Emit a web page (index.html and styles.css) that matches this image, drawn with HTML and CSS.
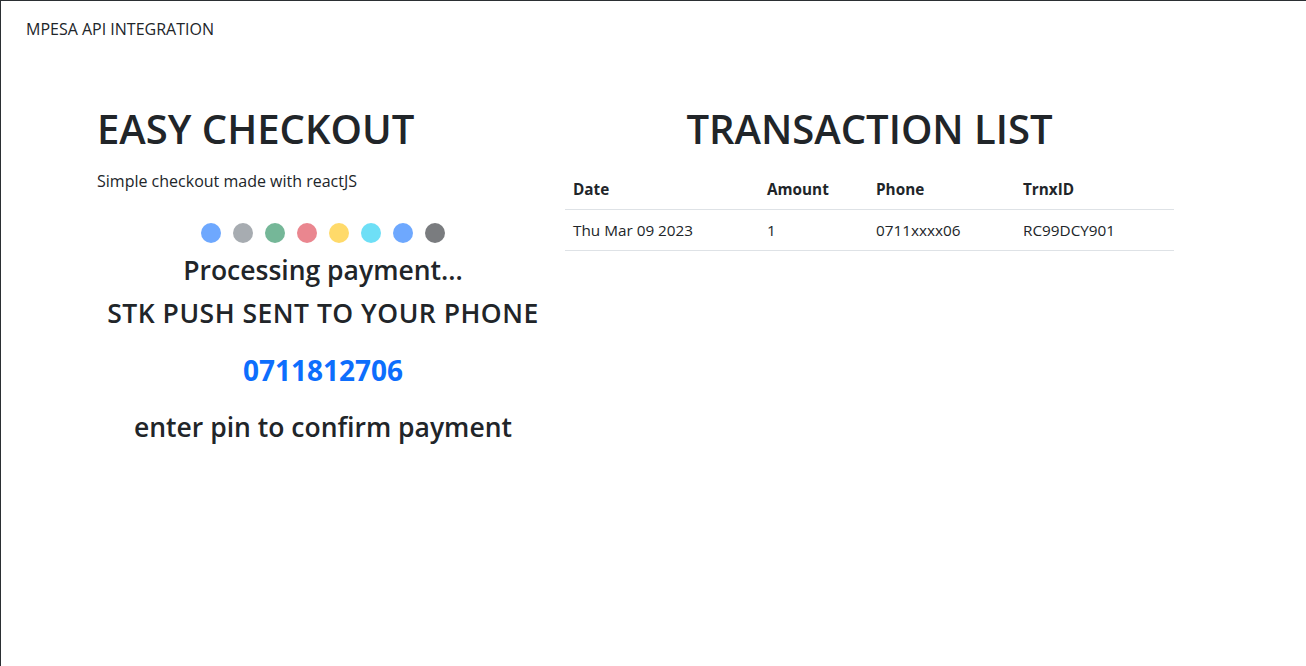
FILE: index.html
```html
<!DOCTYPE html>
<html lang="en">
<head>
<meta charset="utf-8">
<title>MPESA API INTEGRATION</title>
<link rel="stylesheet" href="styles.css">
</head>
<body>
<div class="frame">
  <nav class="navbar">MPESA API INTEGRATION</nav>
  <main class="content">
    <section class="checkout">
      <h1 class="title">EASY CHECKOUT</h1>
      <p class="lead">Simple checkout made with reactJS</p>
      <div class="dots">
        <span class="dot dot-primary"></span>
        <span class="dot dot-secondary"></span>
        <span class="dot dot-success"></span>
        <span class="dot dot-danger"></span>
        <span class="dot dot-warning"></span>
        <span class="dot dot-info"></span>
        <span class="dot dot-primary"></span>
        <span class="dot dot-dark"></span>
      </div>
      <h3 class="status first">Processing payment...</h3>
      <h3 class="status caps">STK PUSH SENT TO YOUR PHONE</h3>
      <h3 class="status phone">0711812706</h3>
      <h3 class="status last">enter pin to confirm payment</h3>
    </section>
    <section class="transactions">
      <h1 class="title center">TRANSACTION LIST</h1>
      <table class="table">
        <colgroup>
          <col class="c1"><col class="c2"><col class="c3"><col class="c4">
        </colgroup>
        <thead>
          <tr><th>Date</th><th>Amount</th><th>Phone</th><th>TrnxID</th></tr>
        </thead>
        <tbody>
          <tr><td>Thu Mar 09 2023</td><td>1</td><td>0711xxxx06</td><td>RC99DCY901</td></tr>
        </tbody>
      </table>
    </section>
  </main>
</div>
</body>
</html>
```
FILE: styles.css
```css
html, body {
  margin: 0;
  padding: 0;
  background: #fff;
}
body {
  font-family: "Open Sans", "Noto Sans", sans-serif;
  color: #212529;
  font-size: 16px;
}
.frame {
  border-top: 1px solid #2b2f33;
  border-left: 1px solid #2b2f33;
  min-height: 665px;
}
.navbar {
  height: 56px;
  display: flex;
  align-items: center;
  padding-left: 25px;
  font-size: 16px;
}
.content {
  display: flex;
  padding-left: 96px;
  gap: 16px;
  align-items: flex-start;
}
.checkout {
  width: 452px;
  text-align: center;
}
.transactions {
  width: 609px;
}
.title {
  margin: 48px 0 0;
  font-size: 40px;
  line-height: 48px;
  font-weight: 600;
  text-align: left;
}
.title.center {
  text-align: center;
}
.lead {
  margin: 16px 0 0;
  font-size: 16px;
  line-height: 24px;
  text-align: left;
}
.dots {
  margin-top: 30px;
  display: flex;
  justify-content: center;
  gap: 12px;
}
.dot {
  width: 20px;
  height: 20px;
  border-radius: 50%;
  opacity: 0.6;
}
.dot-primary { background: #0d6efd; }
.dot-secondary { background: #6c757d; }
.dot-success { background: #198754; }
.dot-danger { background: #dc3545; }
.dot-warning { background: #ffc107; }
.dot-info { background: #0dcaf0; }
.dot-dark { background: #212529; }
.status {
  margin: 0;
  font-size: 26.5px;
  line-height: 32px;
  font-weight: 600;
}
.status.first {
  margin-top: 11px;
}
.status.caps {
  margin-top: 11px;
  letter-spacing: 0.5px;
}
.status.phone {
  margin-top: 25px;
  color: #0d6efd;
  font-size: 28px;
  font-weight: 700;
}
.status.last {
  margin-top: 25px;
}
.table {
  margin-top: 16px;
  width: 609px;
  border-collapse: collapse;
  table-layout: fixed;
  font-size: 15.3px;
}
.c1 { width: 194px; }
.c2 { width: 109px; }
.c3 { width: 147px; }
.c4 { width: 159px; }
.table th,
.table td {
  padding: 8px;
  line-height: 24px;
  text-align: left;
  border-bottom: 1px solid #dee2e6;
}
.table th {
  font-weight: 700;
}
```
